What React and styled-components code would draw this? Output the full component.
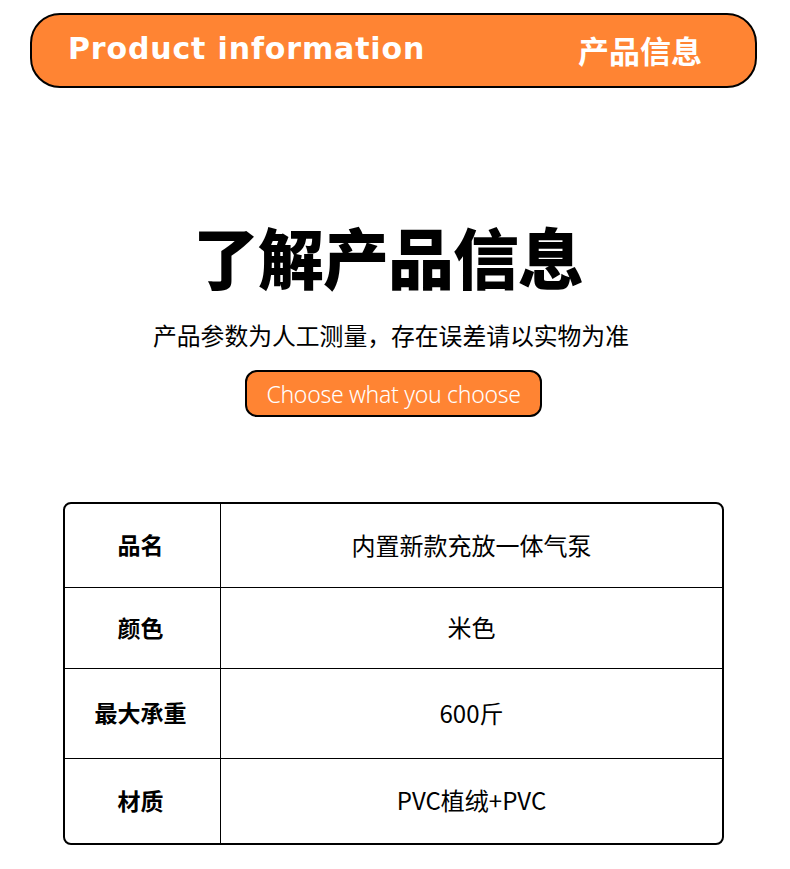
import { Fragment } from 'react';
import styled, { createGlobalStyle } from 'styled-components';

const GlobalStyle = createGlobalStyle`
  html, body {
    margin: 0;
    padding: 0;
    background: #ffffff;
  }
  body {
    font-family: "Noto Sans CJK SC", "Noto Sans", sans-serif;
    color: #000;
  }
`;

const Page = styled.div`
  width: 790px;
  height: 869px;
  display: flex;
  flex-direction: column;
  align-items: center;
  padding-top: 13px;
  box-sizing: border-box;
`;

const HeaderBar = styled.header`
  width: 727px;
  height: 75px;
  box-sizing: border-box;
  margin-right: 3px;
  background: #ff8433;
  border: 2px solid #000;
  border-radius: 30px;
  display: flex;
  align-items: center;
  justify-content: space-between;
  padding: 0 53px 0 36px;
`;

const HeaderTitle = styled.h1`
  margin: 0 0 4px;
  color: #fff;
  font-family: "DejaVu Sans", "Noto Sans", sans-serif;
  font-weight: 700;
  font-size: 30px;
  letter-spacing: 0.85px;
`;

const HeaderTag = styled.span`
  color: #fff;
  font-family: "Noto Sans CJK SC", sans-serif;
  font-weight: 700;
  font-size: 31px;
  margin-bottom: 2px;
`;

const Title = styled.h2`
  margin: 129px 14px 0 0;
  font-family: "Noto Sans CJK SC", sans-serif;
  font-weight: 900;
  font-size: 66px;
  line-height: 76px;
  letter-spacing: -1px;
`;

const Subtitle = styled.p`
  margin: 26px 8px 0 0;
  font-size: 23.8px;
  line-height: 32px;
  font-weight: 400;
`;

const ChooseButton = styled.div`
  margin: 19px 3px 0 0;
  width: 297px;
  height: 47px;
  flex-shrink: 0;
  box-sizing: border-box;
  background: #ff8433;
  border: 2px solid #000;
  border-radius: 12px;
  display: flex;
  align-items: center;
  justify-content: center;
  color: #fff;
  font-family: "Noto Sans", sans-serif;
  font-weight: 300;
  font-size: 23px;
  letter-spacing: -0.3px;
`;

const Table = styled.div`
  margin: 85px 3px 0 0;
  width: 661px;
  box-sizing: border-box;
  border: 2px solid #000;
  border-radius: 8px;
  display: grid;
  grid-template-columns: 156px 1fr;
  overflow: hidden;
`;

const Cell = styled.div`
  height: ${(p) => p.$h}px;
  display: flex;
  align-items: center;
  justify-content: center;
  box-sizing: border-box;
  border-bottom: ${(p) => (p.$last ? 'none' : '1.5px solid #000')};
  border-right: ${(p) => (p.$label ? '1.5px solid #000' : 'none')};
  font-size: ${(p) => (p.$label ? 23 : 24)}px;
  font-weight: ${(p) => (p.$label ? 700 : 400)};
  padding: 0 ${(p) => (p.$label ? '4px' : '0')} 3px 0;
`;

const rows = [
  { label: '品名', value: '内置新款充放一体气泵', h: 84 },
  { label: '颜色', value: '米色', h: 81 },
  { label: '最大承重', value: '600斤', h: 90 },
  { label: '材质', value: 'PVC植绒+PVC', h: 84 },
];

export default function App() {
  return (
    <>
      <GlobalStyle />
      <Page>
        <HeaderBar>
          <HeaderTitle>Product information</HeaderTitle>
          <HeaderTag>产品信息</HeaderTag>
        </HeaderBar>
        <Title>了解产品信息</Title>
        <Subtitle>产品参数为人工测量，存在误差请以实物为准</Subtitle>
        <ChooseButton>Choose what you choose</ChooseButton>
        <Table>
          {rows.map((r, i) => (
            <Fragment key={r.label}>
              <Cell $label $h={r.h} $last={i === rows.length - 1}>
                {r.label}
              </Cell>
              <Cell $h={r.h} $last={i === rows.length - 1}>
                {r.value}
              </Cell>
            </Fragment>
          ))}
        </Table>
      </Page>
    </>
  );
}
